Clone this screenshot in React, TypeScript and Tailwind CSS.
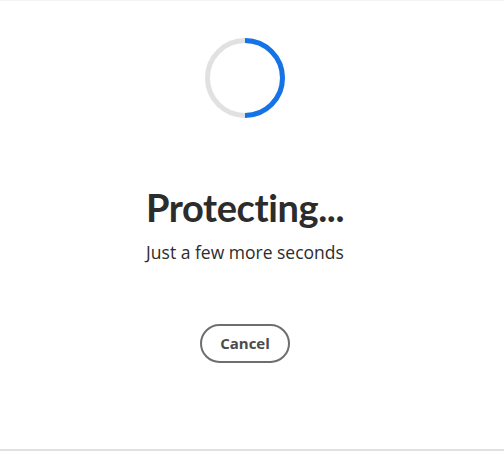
import React from "react";

export default function App() {
  return (
    <div className="w-[504px] h-[451px] bg-white border-t border-t-[#f3f3f3] border-b-2 border-b-[#e1e1e1]" style={{ fontFamily: '"Open Sans", "Noto Sans", sans-serif' }}>
      <div className="w-[490px] flex flex-col items-center">
        <svg width="80" height="80" viewBox="0 0 80 80" className="mt-[37px]">
          <circle cx="40" cy="40" r="37.5" fill="none" stroke="#e1e1e1" strokeWidth="5" />
          <path d="M40 2.5 A37.5 37.5 0 0 1 40 77.5" fill="none" stroke="#1473e6" strokeWidth="5" />
        </svg>
        <h1 className="mt-[65px] text-[38px] leading-[49px] font-bold text-[#2c2c2c] tracking-[-0.4px]" style={{ fontFamily: 'Lato, sans-serif' }}>Protecting...</h1>
        <p className="mt-[8px] text-[17.5px] leading-[24px] text-[#2c2c2c]">Just a few more seconds</p>
        <button className="mt-[60px] w-[90px] h-[39px] rounded-full border-2 border-[#6e6e6e] text-[#4b4b4b] text-[15px] font-bold flex items-center justify-center">Cancel</button>
      </div>
    </div>
  );
}
